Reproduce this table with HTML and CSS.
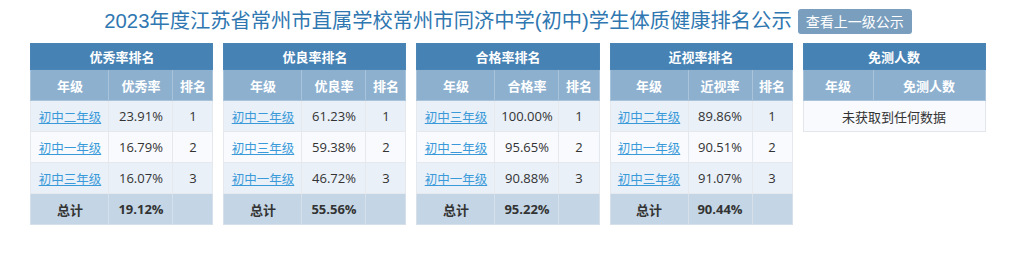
FILE: index.html
```html
<!DOCTYPE html>
<html lang="zh">
<head>
<meta charset="utf-8">
<title>排名公示</title>
<link rel="stylesheet" href="styles.css">
</head>
<body>
<div class="page">
  <div class="head">
    <h1 class="title">2023年度江苏省常州市直属学校常州市同济中学(初中)学生体质健康排名公示</h1>
    <button class="btn">查看上一级公示</button>
  </div>
  <div class="boards">
    <table class="rank">
      <colgroup><col class="c1"><col class="c2"><col class="c3"></colgroup>
      <tr class="cap"><th colspan="3">优秀率排名</th></tr>
      <tr class="sub"><th>年级</th><th>优秀率</th><th>排名</th></tr>
      <tr class="odd"><td><a href="#">初中二年级</a></td><td>23.91%</td><td>1</td></tr>
      <tr class="even"><td><a href="#">初中一年级</a></td><td>16.79%</td><td>2</td></tr>
      <tr class="odd"><td><a href="#">初中三年级</a></td><td>16.07%</td><td>3</td></tr>
      <tr class="total"><td>总计</td><td>19.12%</td><td></td></tr>
    </table>
    <table class="rank">
      <colgroup><col class="c1"><col class="c2"><col class="c3"></colgroup>
      <tr class="cap"><th colspan="3">优良率排名</th></tr>
      <tr class="sub"><th>年级</th><th>优良率</th><th>排名</th></tr>
      <tr class="odd"><td><a href="#">初中二年级</a></td><td>61.23%</td><td>1</td></tr>
      <tr class="even"><td><a href="#">初中三年级</a></td><td>59.38%</td><td>2</td></tr>
      <tr class="odd"><td><a href="#">初中一年级</a></td><td>46.72%</td><td>3</td></tr>
      <tr class="total"><td>总计</td><td>55.56%</td><td></td></tr>
    </table>
    <table class="rank">
      <colgroup><col class="c1"><col class="c2"><col class="c3"></colgroup>
      <tr class="cap"><th colspan="3">合格率排名</th></tr>
      <tr class="sub"><th>年级</th><th>合格率</th><th>排名</th></tr>
      <tr class="odd"><td><a href="#">初中三年级</a></td><td>100.00%</td><td>1</td></tr>
      <tr class="even"><td><a href="#">初中二年级</a></td><td>95.65%</td><td>2</td></tr>
      <tr class="odd"><td><a href="#">初中一年级</a></td><td>90.88%</td><td>3</td></tr>
      <tr class="total"><td>总计</td><td>95.22%</td><td></td></tr>
    </table>
    <table class="rank">
      <colgroup><col class="c1"><col class="c2"><col class="c3"></colgroup>
      <tr class="cap"><th colspan="3">近视率排名</th></tr>
      <tr class="sub"><th>年级</th><th>近视率</th><th>排名</th></tr>
      <tr class="odd"><td><a href="#">初中二年级</a></td><td>89.86%</td><td>1</td></tr>
      <tr class="even"><td><a href="#">初中一年级</a></td><td>90.51%</td><td>2</td></tr>
      <tr class="odd"><td><a href="#">初中三年级</a></td><td>91.07%</td><td>3</td></tr>
      <tr class="total"><td>总计</td><td>90.44%</td><td></td></tr>
    </table>
    <table class="rank">
      <colgroup><col class="d1"><col class="d2"></colgroup>
      <tr class="cap"><th colspan="2">免测人数</th></tr>
      <tr class="sub"><th>年级</th><th>免测人数</th></tr>
      <tr class="empty"><td colspan="2">未获取到任何数据</td></tr>
    </table>
  </div>
</div>
</body>
</html>
```

FILE: styles.css
```css
html, body {
  margin: 0;
  padding: 0;
  background: #ffffff;
}
body {
  font-family: "Open Sans", "Noto Sans CJK SC", sans-serif;
  color: #333333;
  font-size: 13px;
}
.page {
  padding: 9px 8px 0 0;
}
.head {
  display: flex;
  justify-content: center;
  align-items: center;
  gap: 6px;
  height: 25px;
}
.title {
  margin: 0;
  font-family: "Liberation Sans", "Noto Sans CJK SC", sans-serif;
  font-size: 20.3px;
  font-weight: normal;
  color: #2f77b1;
  line-height: 25px;
  white-space: nowrap;
}
.btn {
  height: 25px;
  width: 114px;
  padding: 0;
  border: none;
  border-radius: 3px;
  background: #7a9ebe;
  color: #ffffff;
  font-family: "Noto Sans CJK SC", sans-serif;
  font-size: 14px;
  line-height: 25px;
}
.boards {
  display: flex;
  justify-content: center;
  gap: 10px;
  margin-top: 9px;
}
.rank {
  width: 182px;
  border-collapse: collapse;
  table-layout: fixed;
  align-self: flex-start;
}
.c1 { width: 78px; }
.c2 { width: 64px; }
.c3 { width: 40px; }
.d1 { width: 70px; }
.d2 { width: 112px; }
.rank th, .rank td {
  padding: 0;
  text-align: center;
  border: 1px solid #e5e9ee;
  white-space: nowrap;
}
.cap th {
  height: 25px;
  background: #4682b4;
  color: #ffffff;
  font-weight: bold;
  font-family: "Noto Sans CJK SC", sans-serif;
  font-size: 13px;
  border-color: #4a85b5;
}
.sub th {
  height: 30px;
  background: #8db0cf;
  color: #ffffff;
  font-weight: bold;
  font-family: "Noto Sans CJK SC", sans-serif;
  font-size: 13px;
  border-color: #a9c3da;
}
.rank td {
  height: 30px;
}
.odd td { background: #e9f0f8; }
.even td { background: #f8fafd; }
.total td {
  background: #c4d6e5;
  font-weight: bold;
  border-color: #d5e0ea;
}
.empty td {
  background: #f8fafd;
  border-color: #e3e6ea;
}
.rank a {
  color: #3a9ad9;
  text-decoration: underline;
  font-family: "Noto Sans CJK SC", sans-serif;
  font-size: 12.5px;
}
```
